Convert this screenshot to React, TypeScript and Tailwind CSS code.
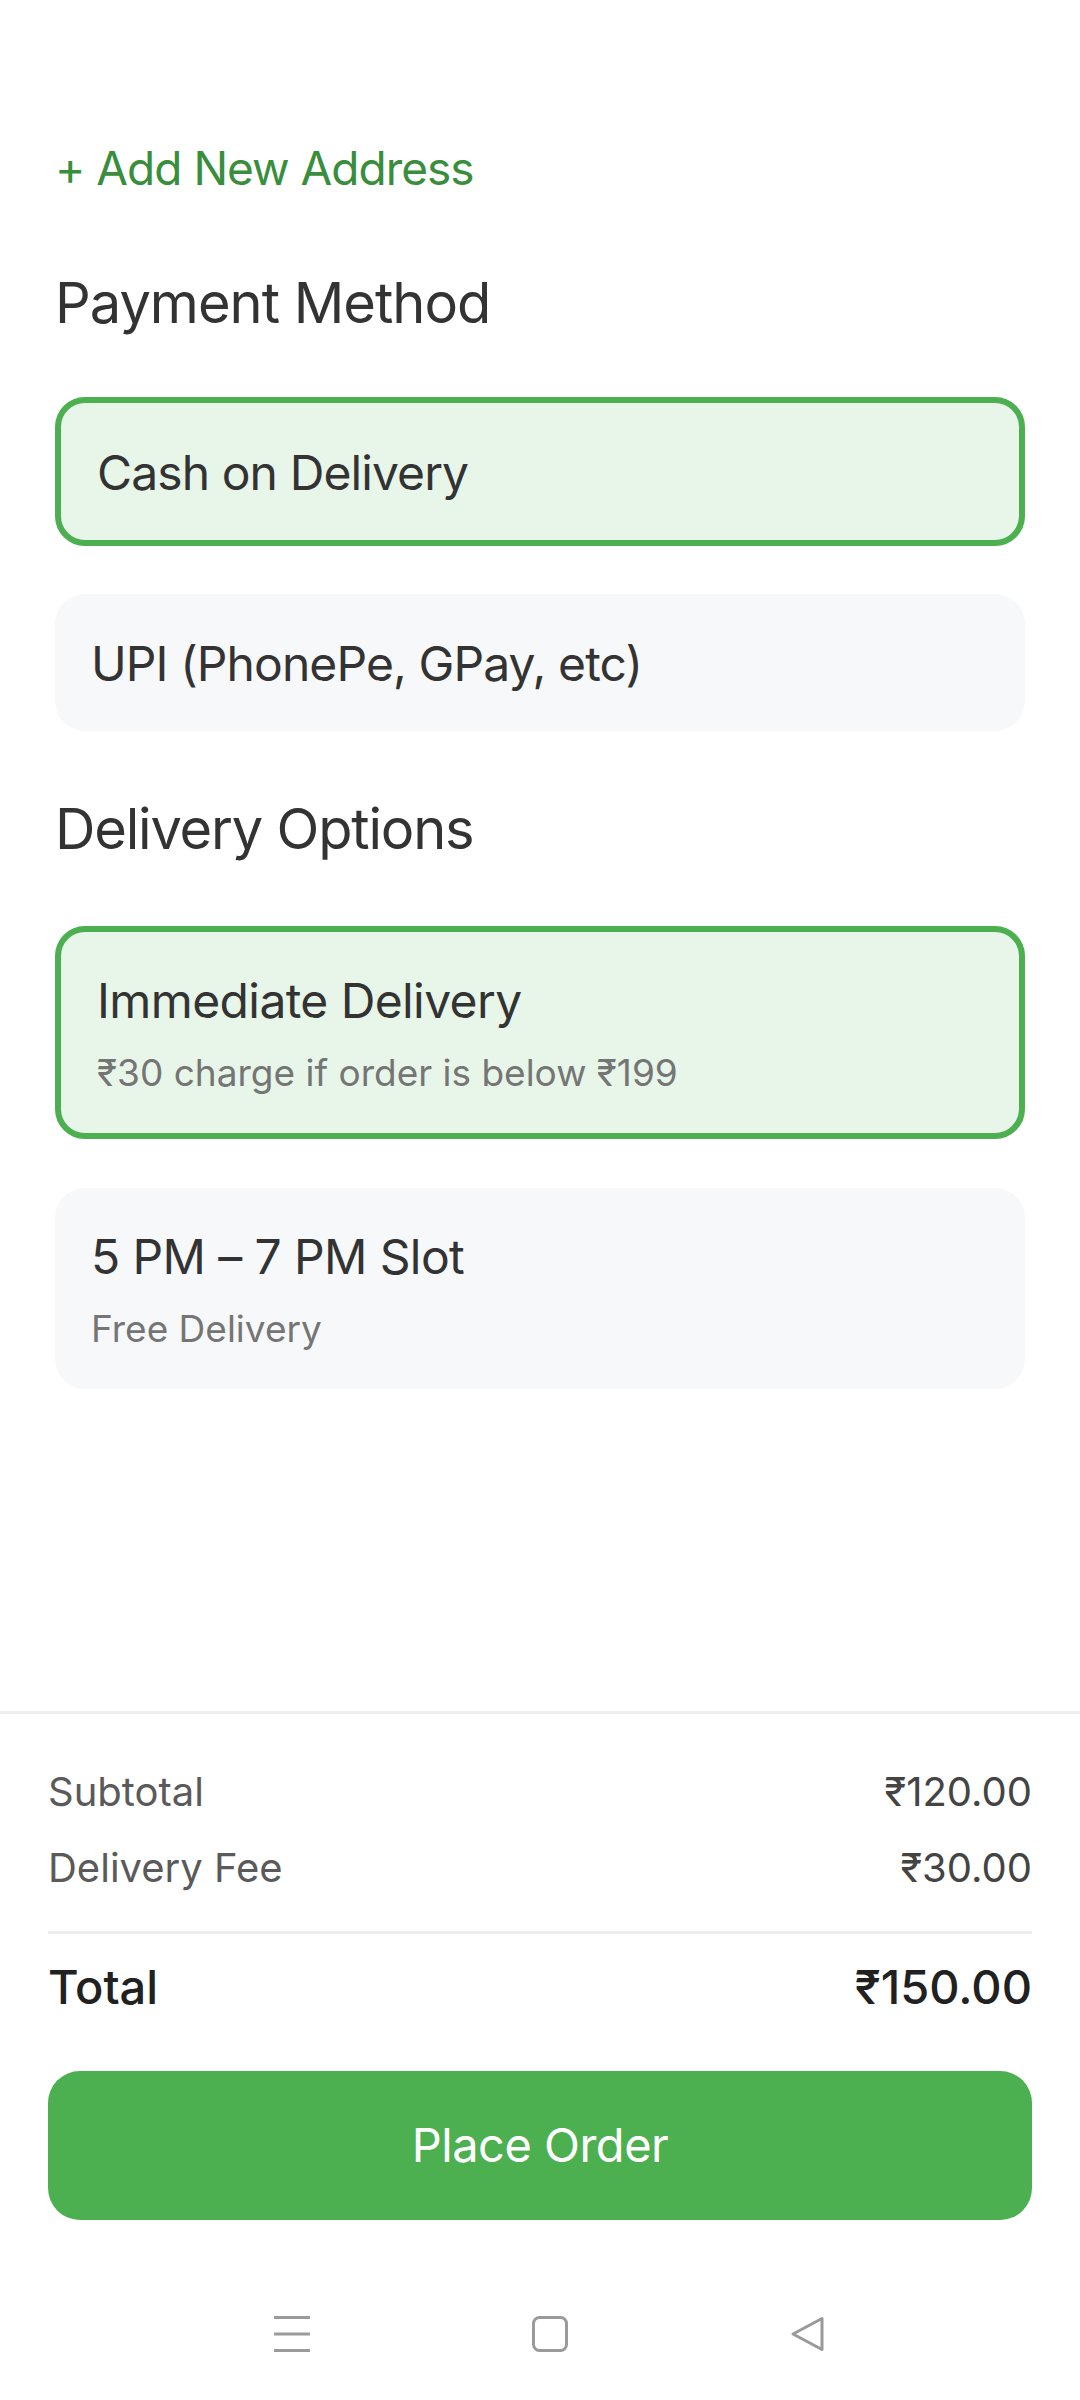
import React from "react";

const font = { fontFamily: "Inter, 'Noto Sans', 'DejaVu Sans', sans-serif" };

const OptionCard = ({
  title,
  subtitle,
  selected,
}: {
  title: string;
  subtitle?: string;
  selected?: boolean;
}) => {
  return (
    <div
      className={
        selected
          ? "rounded-[30px] border-[6px] border-[#4caf50] bg-[#e8f5e9] px-[36px]"
          : "rounded-[30px] bg-[#f7f8fa] px-[36px]"
      }
    >
      {subtitle ? (
        <div className="pt-[37px] pb-[36px]">
          <p className="text-[48px] leading-[64px] tracking-[-0.6px] text-[#333333]">
            {title}
          </p>
          <p className="mt-[16px] text-[37px] leading-[48px] text-[#757575]">
            {subtitle}
          </p>
        </div>
      ) : (
        <div className="pt-[38px] pb-[35px]">
          <p className="text-[48px] leading-[64px] tracking-[-0.9px] text-[#333333]">
            {title}
          </p>
        </div>
      )}
    </div>
  );
};

const SummaryRow = ({ label, value }: { label: string; value: string }) => (
  <div className="flex items-center justify-between text-[40px] leading-[56px]">
    <span className="text-[#5a5a5a]">{label}</span>
    <span className="text-[#444444]">{value}</span>
  </div>
);

const NavBar = () => (
  <div className="flex h-[132px] items-center justify-center gap-[222px] pl-[20px]">
    <svg width="36" height="36" viewBox="0 0 36 36">
      <rect x="0" y="0" width="36" height="3" fill="#9a9a9a" />
      <rect x="0" y="16.5" width="36" height="3" fill="#9a9a9a" />
      <rect x="0" y="33" width="36" height="3" fill="#9a9a9a" />
    </svg>
    <svg width="36" height="36" viewBox="0 0 36 36">
      <rect
        x="1.5"
        y="1.5"
        width="33"
        height="33"
        rx="6"
        fill="none"
        stroke="#9a9a9a"
        strokeWidth="3"
      />
    </svg>
    <svg width="36" height="36" viewBox="0 0 36 36">
      <path
        d="M32 2.5 L32 33.5 L3 18 Z"
        fill="none"
        stroke="#9a9a9a"
        strokeWidth="3"
        strokeLinejoin="round"
      />
    </svg>
  </div>
);

export default function App() {
  return (
    <div className="flex h-[2400px] w-[1080px] flex-col bg-white" style={font}>
      <main className="px-[55px] pt-[136px]">
        <button className="block text-left text-[46px] leading-[64px] tracking-[-1px] text-[#388e3c]">
          + Add New Address
        </button>

        <h2 className="mt-[67px] text-[56px] leading-[72px] tracking-[-1px] text-[#333333]">
          Payment Method
        </h2>
        <div className="mt-[58px] flex flex-col gap-[48px]">
          <OptionCard title="Cash on Delivery" selected />
          <OptionCard title="UPI (PhonePe, GPay, etc)" />
        </div>

        <h2 className="mt-[62px] text-[56px] leading-[72px] tracking-[-1.2px] text-[#333333]">
          Delivery Options
        </h2>
        <div className="mt-[61px] flex flex-col gap-[49px]">
          <OptionCard
            title="Immediate Delivery"
            subtitle="₹30 charge if order is below ₹199"
            selected
          />
          <OptionCard title="5 PM – 7 PM Slot" subtitle="Free Delivery" />
        </div>
      </main>

      <footer className="mt-auto border-t-[3px] border-[#eeeeee]">
        <div className="px-[48px] pt-[50px] pb-[48px]">
          <div className="flex flex-col gap-[20px]">
            <SummaryRow label="Subtotal" value="₹120.00" />
            <SummaryRow label="Delivery Fee" value="₹30.00" />
          </div>
          <div className="mt-[35px] h-[3px] bg-[#eeeeee]" />
          <div className="mt-[23px] flex items-center justify-between text-[47px] font-medium leading-[60px] text-[#212121]">
            <span>Total</span>
            <span>₹150.00</span>
          </div>
          <button className="mt-[54px] flex h-[149px] w-full items-center justify-center rounded-[32px] bg-[#4caf50] text-[47px] tracking-[-0.5px] text-white">
            Place Order
          </button>
        </div>
        <NavBar />
      </footer>
    </div>
  );
}
